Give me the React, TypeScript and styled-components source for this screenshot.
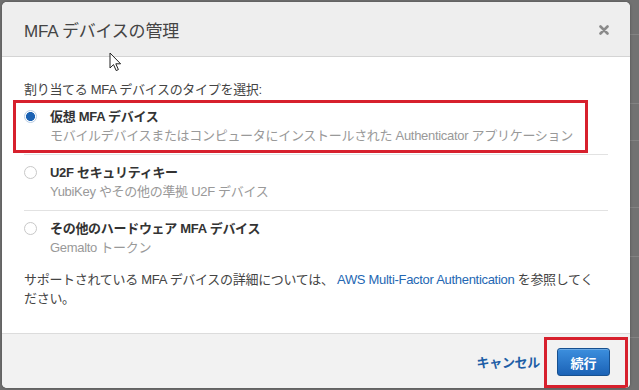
import { createGlobalStyle } from "styled-components";
import styled from "styled-components";

const GlobalStyle = createGlobalStyle`
  html, body {
    margin: 0;
    background: #6f6f6f;
    font-family: "Liberation Sans", "Noto Sans CJK JP", sans-serif;
  }
`;

type DeviceOption = {
  title: string;
  sub: string;
  checked?: boolean;
  marked?: boolean;
};

const options: DeviceOption[] = [
  {
    title: "仮想 MFA デバイス",
    sub: "モバイルデバイスまたはコンピュータにインストールされた Authenticator アプリケーション",
    checked: true,
    marked: true,
  },
  { title: "U2F セキュリティキー", sub: "YubiKey やその他の準拠 U2F デバイス" },
  { title: "その他のハードウェア MFA デバイス", sub: "Gemalto トークン" },
];

const App = () => {
  return (
    <Page>
      <GlobalStyle />
      <Modal>
        <Header>
          <Title>MFA デバイスの管理</Title>
          <CloseButton aria-label="close">
            <svg width="10" height="10" viewBox="0 0 10 10">
              <path d="M1.5 1.5 L8.5 8.5 M8.5 1.5 L1.5 8.5" stroke="#8a8a8a" strokeWidth="2.6" strokeLinecap="round" />
            </svg>
          </CloseButton>
        </Header>
        <Body>
          <Lead>割り当てる MFA デバイスのタイプを選択:</Lead>
          <OptionList>
            {options.map((o) => (
              <Option key={o.title}>
                <Radio $checked={!!o.checked} />
                <OptionText>
                  <OptionTitle>{o.title}</OptionTitle>
                  <OptionSub>{o.sub}</OptionSub>
                </OptionText>
                {o.marked && <OptionMark />}
              </Option>
            ))}
          </OptionList>
          <Note>
            サポートされている MFA デバイスの詳細については、 <Link>AWS Multi-Factor Authentication</Link> を参照してください。
          </Note>
        </Body>
        <Footer>
          <Cancel>キャンセル</Cancel>
          <PrimaryButton>続行</PrimaryButton>
          <ButtonMark />
        </Footer>
        <Cursor width="13" height="20" viewBox="0 0 13 20">
          <path d="M1 1 L1 16 L4.5 12.6 L7.2 18.6 L9.4 17.6 L6.8 11.8 L11.6 11.8 Z" fill="#fff" stroke="#222" strokeWidth="1" strokeLinejoin="round" />
        </Cursor>
      </Modal>
      <Backdrop>
        <BackRow $h={34} />
        <BackRow $h={68} />
        <BackRow $h={36} />
        <BackRow $h={66} />
        <BackRow $h={48} />
        <BackRow $h={80} />
      </Backdrop>
    </Page>
  );
};

export default App;

const Page = styled.div`
  display: flex;
  height: 390px;
  padding: 2px 0 0 2px;
  box-sizing: border-box;
  overflow: hidden;
`;

const Modal = styled.div`
  position: relative;
  width: 628px;
  height: 386px;
  flex-shrink: 0;
  display: flex;
  flex-direction: column;
  background: #fff;
  border-radius: 5px;
  overflow: hidden;
  box-shadow: 0 0 3px rgba(0, 0, 0, 0.3);
`;

const Header = styled.div`
  height: 54px;
  padding: 0 21px 0 22px;
  display: flex;
  align-items: center;
  justify-content: space-between;
  background: #eeeeee;
  border-bottom: 1px solid #d4d4d4;
`;

const Title = styled.h2`
  margin: 0;
  font-size: 17px;
  font-weight: normal;
  color: #444;
  letter-spacing: -0.2px;
`;

const CloseButton = styled.span`
  display: flex;
  margin-top: 1px;
`;

const Body = styled.div`
  flex: 1;
  padding: 23px 22px 0;
  font-size: 13px;
  line-height: 19px;
  color: #444;
  letter-spacing: -0.3px;
`;

const Lead = styled.div`
  margin-bottom: 0;
`;

const OptionList = styled.div`
  display: flex;
  flex-direction: column;
`;

const Option = styled.div`
  position: relative;
  display: flex;
  gap: 13px;
  padding: 8px 0 9px;
  border-bottom: 1px solid #e2e2e2;

  &:last-child {
    border-bottom: none;
  }
`;

const Radio = styled.span<{ $checked: boolean }>`
  width: 13px;
  height: 13px;
  margin-top: 3px;
  box-sizing: border-box;
  border-radius: 50%;
  flex-shrink: 0;
  border: 1px solid ${(p) => (p.$checked ? "#b9cde3" : "#c8c8c8")};
  background: ${(p) => (p.$checked ? "radial-gradient(circle, #1c62b3 0 4.2px, #fff 4.8px)" : "#fff")};
`;

const OptionText = styled.div`
  display: flex;
  flex-direction: column;
`;

const OptionTitle = styled.div`
  font-weight: bold;
  color: #333;
`;

const OptionSub = styled.div`
  color: #999;
`;

const OptionMark = styled.span`
  position: absolute;
  left: -11px;
  top: 1px;
  width: 575px;
  height: 53px;
  box-sizing: border-box;
  border: 3px solid #d7202d;
  pointer-events: none;
`;

const Note = styled.p`
  margin: 4px 0 0;
  padding-right: 8px;
`;

const Link = styled.a`
  color: #2467b3;
  text-decoration: none;
`;

const Footer = styled.div`
  position: relative;
  height: 54px;
  padding: 0 20px;
  display: flex;
  align-items: center;
  justify-content: flex-end;
  gap: 17px;
  background: #f2f2f2;
  border-top: 1px solid #dcdcdc;
`;

const Cancel = styled.span`
  font-size: 13px;
  font-weight: bold;
  color: #1d5ea6;
  letter-spacing: -0.3px;
`;

const PrimaryButton = styled.button`
  width: 53px;
  height: 28px;
  margin-top: 2px;
  border: 1px solid #17508f;
  border-radius: 3px;
  background: linear-gradient(#3c8fde, #1b62b6);
  color: #fff;
  font-family: inherit;
  font-size: 13px;
  font-weight: bold;
  box-shadow: inset 0 1px 0 rgba(255, 255, 255, 0.25);
`;

const ButtonMark = styled.span`
  position: absolute;
  right: 2px;
  top: 3px;
  width: 84px;
  height: 51px;
  box-sizing: border-box;
  border: 3px solid #d7202d;
  pointer-events: none;
`;

const Cursor = styled.svg`
  position: absolute;
  left: 107px;
  top: 50px;
`;

const Backdrop = styled.div`
  flex: 1;
  display: flex;
  flex-direction: column;
  margin-top: -2px;
  background: #727272;
`;

const BackRow = styled.div<{ $h: number }>`
  height: ${(p) => p.$h}px;
  border-bottom: 1px solid #838383;
`;
